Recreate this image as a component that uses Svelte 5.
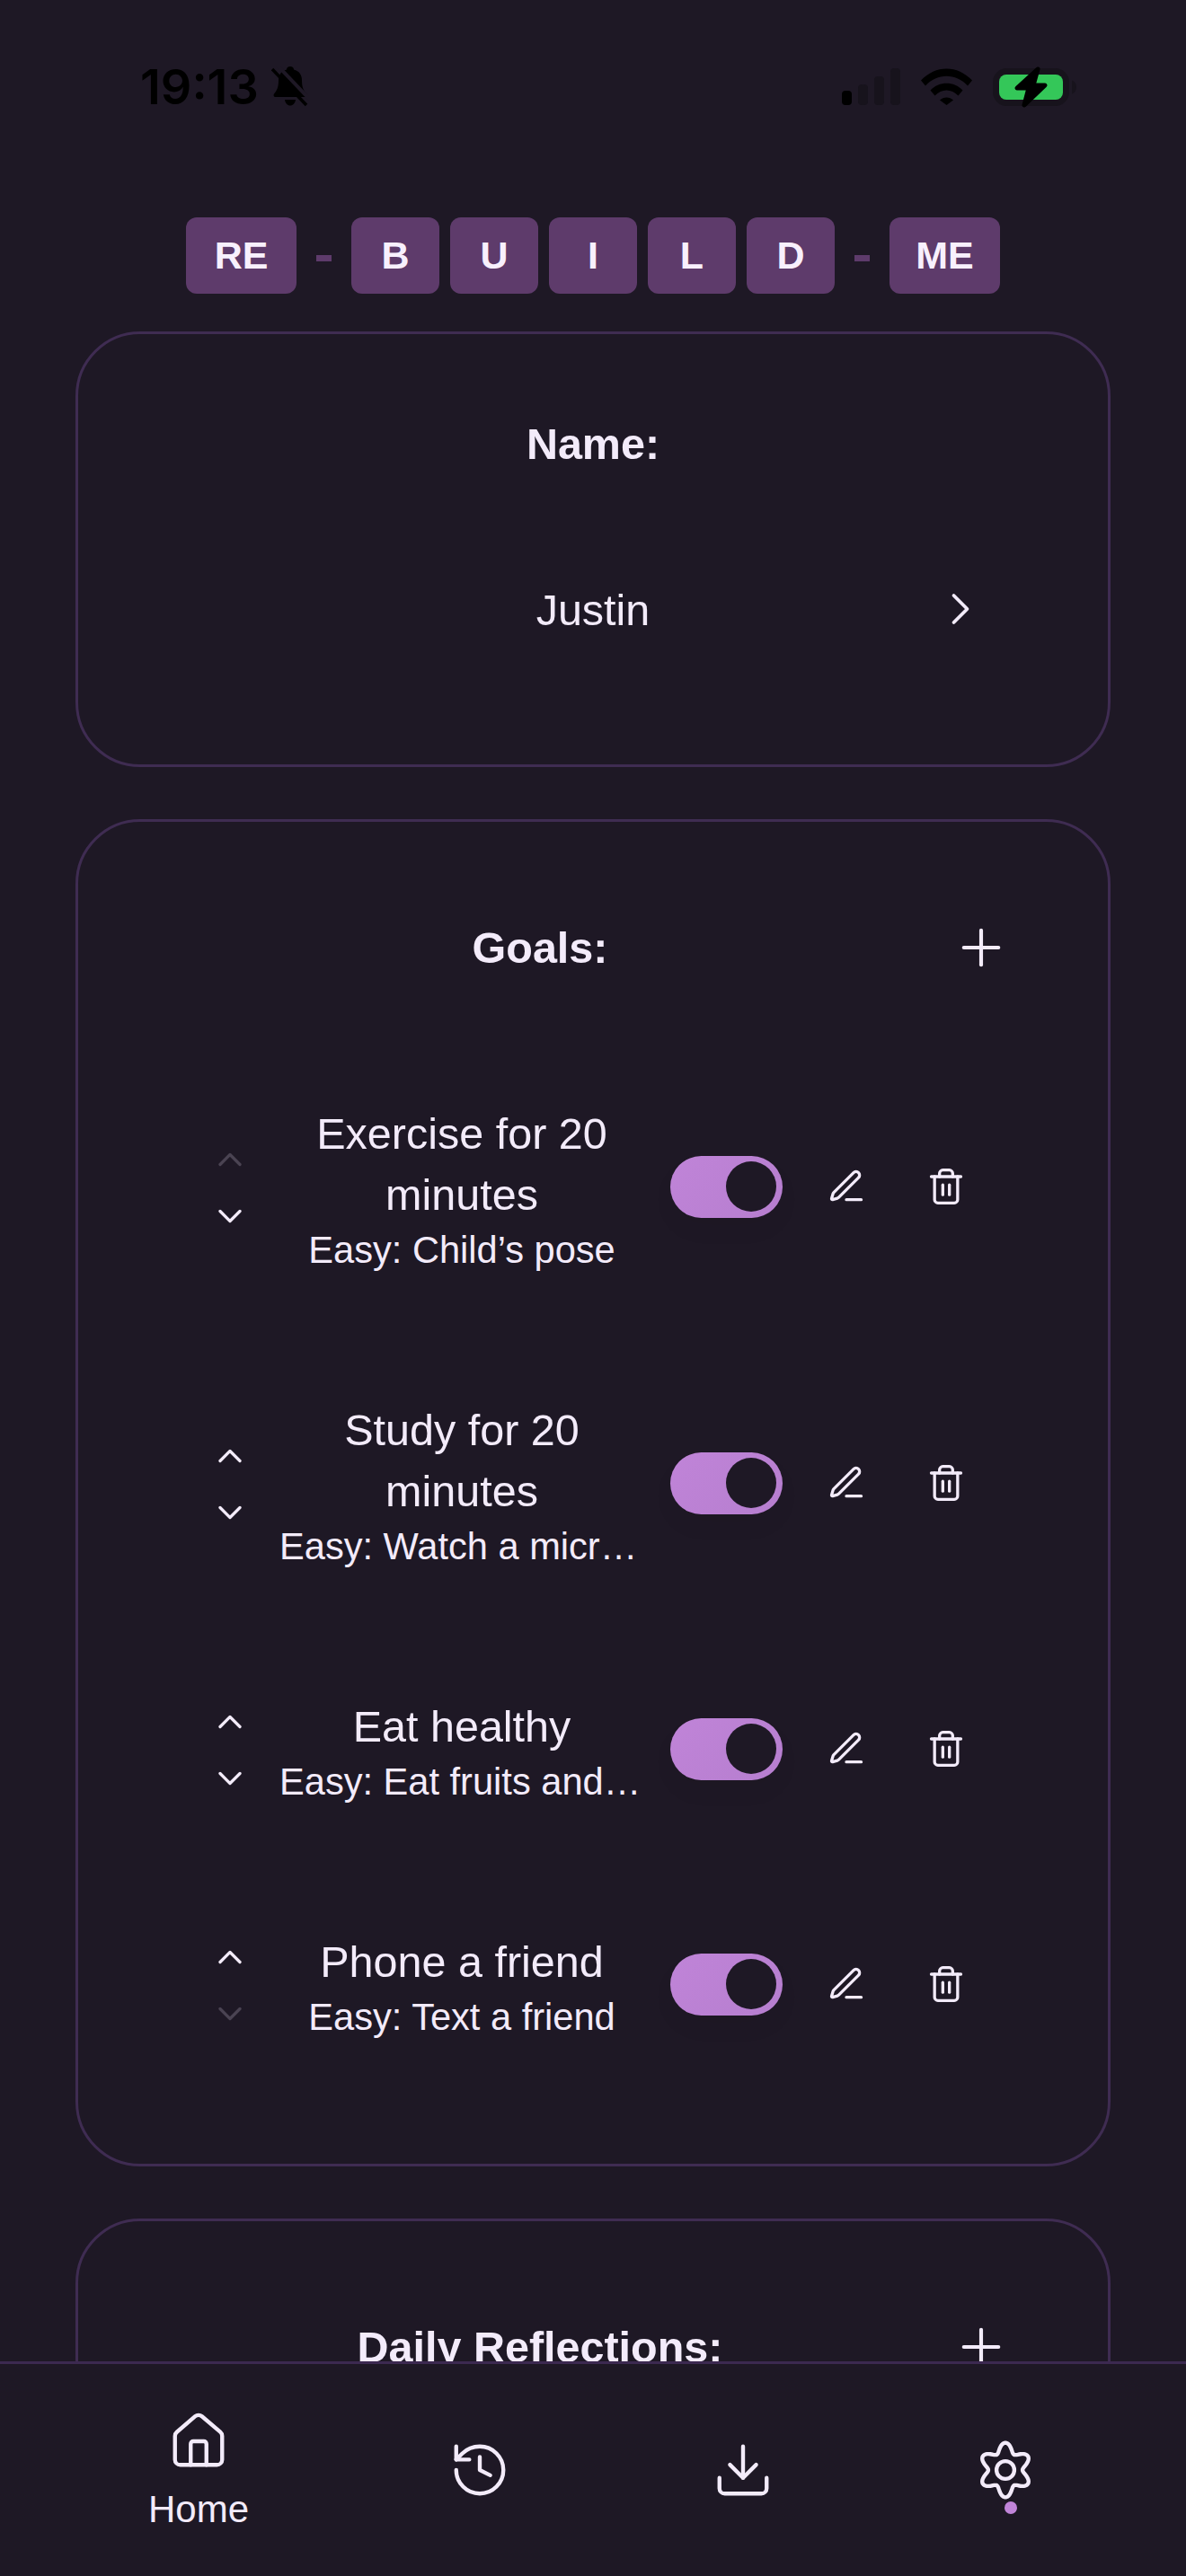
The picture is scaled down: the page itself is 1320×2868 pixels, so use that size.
<script>
  // six lobed cog outline, same curve as the reference gear
  function cogPath() {
    const pts = [];
    for (let i = 0; i < 144; i++) {
      const a = (i / 144) * Math.PI * 2;
      const r = 8.6 + 1.8 * Math.cos(6 * a);
      pts.push(`${(12 + r * Math.sin(a) * 0.96).toFixed(2)} ${(12 - r * Math.cos(a)).toFixed(2)}`);
    }
    return 'M' + pts.join('L') + 'z';
  }

  const icons = {
    up: '<path d="m18 15-6-6-6 6"/>',
    down: '<path d="m6 9 6 6 6-6"/>',
    right: '<path d="m9 18 6-6-6-6"/>',
    plus: '<path d="M5 12h14"/><path d="M12 5v14"/>',
    pen: '<path d="M12 20h9"/><path d="M16.376 3.622a1 1 0 0 1 3.002 3.002L7.368 18.635a2 2 0 0 1-.855.506l-2.872.838a.5.5 0 0 1-.62-.62l.838-2.872a2 2 0 0 1 .506-.854z"/>',
    trash: '<path d="M3 6h18"/><path d="M19 6v14c0 1-1 2-2 2H7c-1 0-2-1-2-2V6"/><path d="M8 6V4c0-1 1-2 2-2h4c1 0 2 1 2 2v2"/><path d="M10 11v6"/><path d="M14 11v6"/>',
    home: '<path d="M15 21v-8a1 1 0 0 0-1-1h-4a1 1 0 0 0-1 1v8"/><path d="M3 10a2 2 0 0 1 .709-1.528l7-5.999a2 2 0 0 1 2.582 0l7 5.999A2 2 0 0 1 21 10v9a2 2 0 0 1-2 2H5a2 2 0 0 1-2-2z"/>',
    history: '<path d="M3 12a9 9 0 1 0 9-9 9.75 9.75 0 0 0-6.74 2.74L3 8"/><path d="M3 3v5h5"/><path d="M12 7v5l4 2"/>',
    download: '<path d="M12 15V3"/><path d="M21 15v4a2 2 0 0 1-2 2H5a2 2 0 0 1-2-2v-4"/><path d="m7 10 5 5 5-5"/>',
    settings: `<path d="${cogPath()}"/><circle cx="12" cy="12" r="3.4"/>`
  };

  const letters = ['B', 'U', 'I', 'L', 'D'];

  let goals = $state([
    { title: 'Exercise for 20 minutes', easy: 'Easy: Child’s pose', on: true },
    { title: 'Study for 20 minutes', easy: 'Easy: Watch a micro lesson', on: true },
    { title: 'Eat healthy', easy: 'Easy: Eat fruits and vegetables', on: true },
    { title: 'Phone a friend', easy: 'Easy: Text a friend', on: true }
  ]);
</script>

{#snippet icon(name, size)}
  <svg class="icon" width={size} height={size} viewBox="0 0 24 24" fill="none" stroke="currentColor" stroke-width="1.5" stroke-linecap="round" stroke-linejoin="round">{@html icons[name]}</svg>
{/snippet}

<div class="screen">
  <div class="status">
    <div class="clock">
      <span class="time">19:13</span>
      <svg width="42" height="46" viewBox="0 0 42 46">
        <path d="M21 0c2.500 0 4 1.500 4 3.500 6 1.500 9 6 9 12 0 7 1.500 11 5 15 1 1.500 .5 3.500-1.500 3.500H4.500c-2 0-2.500-2-1.500-3.500 3.500-4 5-8 5-15 0-6 3-10.500 9-12C17 1.500 18.500 0 21 0zM15 37h12c-.5 4-3 6.500-6 6.500S15.500 41 15 37z" fill="#000"/>
        <path d="M6 -2l38 40" stroke="#1e1825" stroke-width="4"/>
        <path d="M1 3l38 40" stroke="#000" stroke-width="3.500"/>
      </svg>
    </div>
    <div class="indicators">
      <div class="signal">
        <i class="on"></i><i class="b2"></i><i class="b3"></i><i class="b4"></i>
      </div>
      <svg width="57" height="41" viewBox="0 0 57 41">
        <path d="M0 13.500C16-4 41-4 57 13.500l-5 6C39 5 18 5 5 19.500z" fill="#000"/>
        <path d="M10.500 24.500C20 14 37 14 46.500 24.500l-5 6C34 22.500 23 22.500 15.500 30.500z" fill="#000"/>
        <path d="M21 35.500c4-4 11-4 15 0l-7.500 5.500z" fill="#000"/>
      </svg>
      <svg width="93" height="46" viewBox="0 0 93 46">
        <rect x="3.500" y="5.500" width="78" height="35" rx="12" fill="none" stroke="#17131c" stroke-width="7"/>
        <rect x="7" y="9" width="71" height="28" rx="8" fill="#34c759"/>
        <path d="M88 15.500c3 1 5 4 5 7.500s-2 6.500-5 7.500z" fill="#17131c"/>
        <path d="M50 3L27 24h13l-5 19 23-22H45z" fill="#000" stroke="#000" stroke-width="5" stroke-linejoin="round"/>
      </svg>
    </div>
  </div>

  <div class="logo">
    <span class="chip wide">RE</span>
    <span class="dash"></span>
    {#each letters as l}
      <span class="chip">{l}</span>
    {/each}
    <span class="dash"></span>
    <span class="chip wide">ME</span>
  </div>

  <main class="content">
    <section class="card name-card">
      <h2>Name:</h2>
      <div class="name-row">
        <span class="name">Justin</span>
        <span class="go">{@render icon('right', 60)}</span>
      </div>
    </section>

    <section class="card list-card">
      <header class="card-head">
        <h2>Goals:</h2>
        {@render icon('plus', 66)}
      </header>
      <div class="goals">
        {#each goals as goal, i}
          <div class="goal">
            <div class="arrows">
              <span class:off={i === 0}>{@render icon('up', 44)}</span>
              <span class:off={i === goals.length - 1}>{@render icon('down', 44)}</span>
            </div>
            <div class="goal-text">
              <div class="goal-title">{goal.title}</div>
              <div class="goal-easy">{goal.easy}</div>
            </div>
            <button class="switch" class:checked={goal.on} aria-label="Toggle" onclick={() => (goal.on = !goal.on)}>
              <span class="thumb"></span>
            </button>
            <span class="act pen">{@render icon('pen', 44)}</span>
            <span class="act trash">{@render icon('trash', 44)}</span>
          </div>
        {/each}
      </div>
    </section>

    <section class="card list-card">
      <header class="card-head">
        <h2>Daily Reflections:</h2>
        {@render icon('plus', 66)}
      </header>
    </section>
  </main>

  <nav class="tabs">
    <div class="tab">
      {@render icon('home', 70)}
      <span class="tab-label">Home</span>
    </div>
    <div class="tab">{@render icon('history', 70)}</div>
    <div class="tab">{@render icon('download', 70)}</div>
    <div class="tab">
      {@render icon('settings', 70)}
      <span class="dot"></span>
    </div>
  </nav>
</div>

<style>
  :global(body) { margin: 0; background: #1e1825; }

  .screen {
    width: 1320px;
    height: 2868px;
    display: flex;
    flex-direction: column;
    overflow: hidden;
    background: #1e1825;
    color: #f3ebfa;
    font-family: "Liberation Sans", Arial, sans-serif;
  }
  .icon { display: block; flex: none; }

  .status {
    height: 132px;
    flex: none;
    box-sizing: border-box;
    padding: 74px 122px 0 156px;
    display: flex;
    justify-content: space-between;
    align-items: flex-start;
  }
  .clock { display: flex; align-items: center; height: 46px; color: #000; }
  .time { width: 146px; font-family: Inter, "Liberation Sans", sans-serif; font-size: 54px; font-weight: 600; line-height: 46px; }
  .indicators { display: flex; align-items: flex-start; gap: 23px; }
  .indicators svg { display: block; }
  .indicators svg:nth-child(2) { margin-top: 2px; }
  .signal { display: flex; align-items: flex-end; gap: 7px; height: 41px; margin-top: 2px; }
  .signal i { display: block; width: 11px; border-radius: 4px; background: #17131c; height: 16px; }
  .signal i.on { background: #000; }
  .signal i.b2 { height: 23px; }
  .signal i.b3 { height: 32px; }
  .signal i.b4 { height: 41px; }

  .logo {
    flex: none;
    margin-top: 110px;
    margin-bottom: 42px;
    padding-left: 207px;
    display: flex;
    align-items: center;
    gap: 12px;
  }
  .chip {
    width: 98px;
    height: 85px;
    border-radius: 12px;
    background: #5e3b6b;
    color: #f8f0fd;
    font-size: 43px;
    font-weight: 700;
    display: flex;
    align-items: center;
    justify-content: center;
  }
  .chip.wide { width: 123px; }
  .dash { width: 17px; height: 7px; margin: 6px 10px 0; background: #5e3b6b; }

  .content {
    flex: 1;
    min-height: 0;
    overflow: hidden;
    padding: 0 84px;
    display: flex;
    flex-direction: column;
    gap: 58px;
  }
  .card {
    flex: none;
    border: 3px solid #3f2c52;
    border-radius: 72px;
  }
  h2 { margin: 0; font-size: 48.500px; line-height: 68px; font-weight: 700; text-align: center; }

  .name-card { height: 485px; box-sizing: border-box; padding-top: 88px; }
  .name-row { margin-top: 117px; height: 68px; position: relative; display: flex; justify-content: center; align-items: center; }
  .name { font-size: 48.500px; line-height: 68px; }
  .go { position: absolute; right: 134px; top: 3px; }

  .list-card { padding-top: 106px; padding-bottom: 135px; }
  .card-head { display: flex; align-items: center; padding: 0 108px 0 56px; height: 68px; }
  .card-head h2 { flex: 1; }

  .goals { margin-top: 133px; display: flex; flex-direction: column; gap: 132px; }
  .goal { display: flex; align-items: center; padding-left: 147px; }
  .goal .icon { stroke-width: 1.8; }
  .arrows { width: 44px; padding-top: 3px; display: flex; flex-direction: column; align-items: center; gap: 19px; }
  .arrows span { display: block; }
  .arrows .off { color: #4a4352; }
  .goal-text { width: 406px; margin-left: 33px; padding-top: 6px; text-align: center; }
  .goal-title { font-size: 48.500px; line-height: 68px; }
  .goal-easy { font-size: 41.600px; line-height: 56px; white-space: nowrap; overflow: hidden; text-overflow: ellipsis; }

  .switch {
    width: 125px;
    height: 69px;
    margin-left: 29px;
    padding: 0;
    border: 0;
    border-radius: 35px;
    background: linear-gradient(135deg, #c084d8, #b67ecf);
    position: relative;
    flex: none;
    box-shadow: 0 14px 24px rgba(0, 0, 0, 0.04);
  }
  .switch:not(.checked) { background: #4a4352; }
  .thumb { position: absolute; top: 6px; left: 7px; width: 56px; height: 56px; border-radius: 50%; background: #1e1825; }
  .switch.checked .thumb { left: 62px; }
  .act { display: block; flex: none; }
  .pen { margin-left: 49px; }
  .trash { margin-left: 67px; }

  .tabs {
    flex: none;
    height: 239px;
    box-sizing: border-box;
    border-top: 3px solid #3c2950;
    background: #1e1825;
    padding: 0 166px 0 165px;
    display: flex;
    align-items: center;
    justify-content: space-between;
    position: relative;
  }
  .tab { position: relative; display: flex; flex-direction: column; align-items: center; }
  .tab-label { margin-top: 18px; font-size: 42px; line-height: 46px; }
  .dot { position: absolute; left: 34px; top: 70px; width: 14px; height: 14px; border-radius: 50%; background: #c084d8; }
</style>
